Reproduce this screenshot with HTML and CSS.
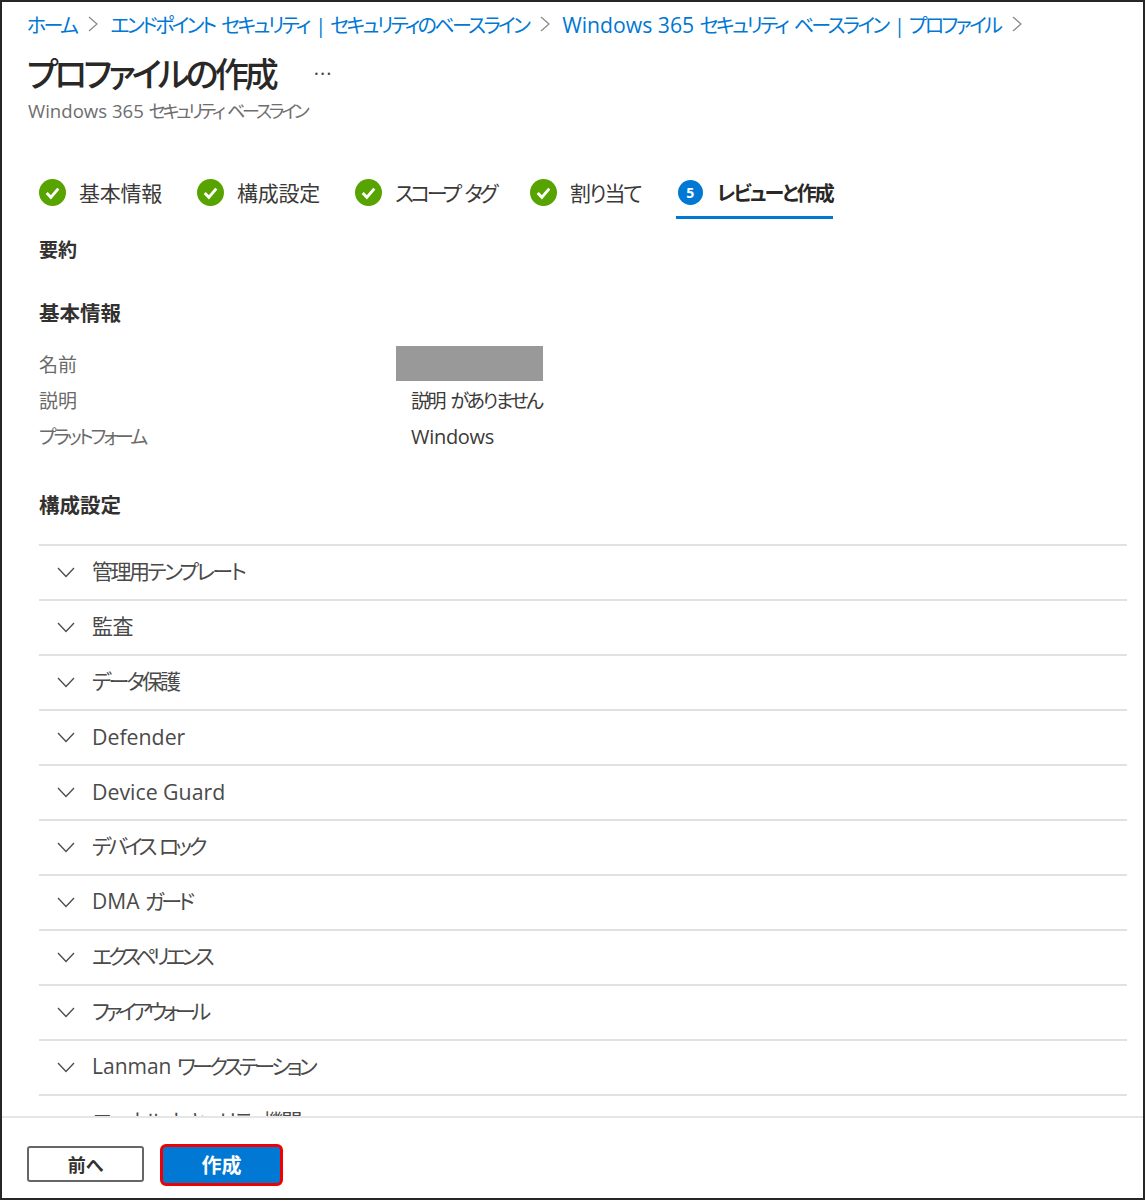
FILE: index.html
```html
<!DOCTYPE html>
<html lang="ja">
<head>
<meta charset="utf-8">
<title>プロファイルの作成</title>
<link rel="stylesheet" href="styles.css">
</head>
<body>
<div class="frame">
  <main class="main">
    <nav class="crumbs">
      <a class="crumb">ホーム</a>
      <svg class="sep" viewBox="0 0 10 16"><path d="M1 1 9 8 1 15"/></svg>
      <a class="crumb">エンドポイント セキュリティ | セキュリティのベースライン</a>
      <svg class="sep" viewBox="0 0 10 16"><path d="M1 1 9 8 1 15"/></svg>
      <a class="crumb"><span class="lat">Windows 365 </span>セキュリティ ベースライン | プロファイル</a>
      <svg class="sep" viewBox="0 0 10 16"><path d="M1 1 9 8 1 15"/></svg>
    </nav>
    <div class="title-row">
      <h1 class="title">プロファイルの作成</h1>
      <span class="more">···</span>
    </div>
    <p class="subtitle"><span class="lat">Windows 365 </span>セキュリティ ベースライン</p>

    <div class="steps">
      <div class="step">
        <svg class="check" viewBox="0 0 28 28"><circle cx="14" cy="14" r="14"/><path d="M8 14.500 12.300 19 20 10"/></svg>
        <span class="step-label">基本情報</span>
      </div>
      <div class="step">
        <svg class="check" viewBox="0 0 28 28"><circle cx="14" cy="14" r="14"/><path d="M8 14.500 12.300 19 20 10"/></svg>
        <span class="step-label">構成設定</span>
      </div>
      <div class="step">
        <svg class="check" viewBox="0 0 28 28"><circle cx="14" cy="14" r="14"/><path d="M8 14.500 12.300 19 20 10"/></svg>
        <span class="step-label step-label-scope">スコープ タグ</span>
      </div>
      <div class="step">
        <svg class="check" viewBox="0 0 28 28"><circle cx="14" cy="14" r="14"/><path d="M8 14.500 12.300 19 20 10"/></svg>
        <span class="step-label step-label-assign">割り当て</span>
      </div>
      <div class="step step-active">
        <span class="step-num">5</span>
        <span class="step-label step-label-active">レビューと作成</span>
      </div>
    </div>

    <h2 class="h-summary">要約</h2>
    <h2 class="h-basic">基本情報</h2>
    <dl class="info">
      <dt class="info-key">名前</dt><dd class="info-val"><span class="redact"></span></dd>
      <dt class="info-key">説明</dt><dd class="info-val">説明 がありません</dd>
      <dt class="info-key info-key-long">プラットフォーム</dt><dd class="info-val"><span class="lat-val">Windows</span></dd>
    </dl>
    <h2 class="h-config">構成設定</h2>

    <div class="list">
      <div class="row"><svg class="chev" viewBox="0 0 18 11"><path d="M1 1 9 9.500 17 1"/></svg><span class="row-text k1">管理用テンプレート</span></div>
      <div class="row"><svg class="chev" viewBox="0 0 18 11"><path d="M1 1 9 9.500 17 1"/></svg><span class="row-text k0">監査</span></div>
      <div class="row"><svg class="chev" viewBox="0 0 18 11"><path d="M1 1 9 9.500 17 1"/></svg><span class="row-text k1b">データ保護</span></div>
      <div class="row"><svg class="chev" viewBox="0 0 18 11"><path d="M1 1 9 9.500 17 1"/></svg><span class="row-text row-latin">Defender</span></div>
      <div class="row"><svg class="chev" viewBox="0 0 18 11"><path d="M1 1 9 9.500 17 1"/></svg><span class="row-text row-latin">Device Guard</span></div>
      <div class="row"><svg class="chev" viewBox="0 0 18 11"><path d="M1 1 9 9.500 17 1"/></svg><span class="row-text k2">デバイス ロック</span></div>
      <div class="row"><svg class="chev" viewBox="0 0 18 11"><path d="M1 1 9 9.500 17 1"/></svg><span class="row-text">DMA <span class="k2">ガード</span></span></div>
      <div class="row"><svg class="chev" viewBox="0 0 18 11"><path d="M1 1 9 9.500 17 1"/></svg><span class="row-text k3">エクスペリエンス</span></div>
      <div class="row"><svg class="chev" viewBox="0 0 18 11"><path d="M1 1 9 9.500 17 1"/></svg><span class="row-text k3">ファイアウォール</span></div>
      <div class="row"><svg class="chev" viewBox="0 0 18 11"><path d="M1 1 9 9.500 17 1"/></svg><span class="row-text">Lanman <span class="k2">ワークステーション</span></span></div>
      <div class="row"><svg class="chev" viewBox="0 0 18 11"><path d="M1 1 9 9.500 17 1"/></svg><span class="row-text k1">ローカル セキュリティ機関</span></div>
    </div>
  </main>
  <footer class="footer">
    <button class="btn btn-prev">前へ</button>
    <button class="btn btn-create">作成</button>
  </footer>
</div>
</body>
</html>
```
FILE: styles.css
```css
* { box-sizing: border-box; }
html, body { margin: 0; padding: 0; background: #fff; }
body {
  font-family: "Open Sans", "Noto Sans CJK JP", sans-serif;
  font-feature-settings: "palt";
  color: #323130;
}
.frame {
  width: 1145px;
  height: 1200px;
  border: 2px solid #262626;
  display: flex;
  flex-direction: column;
  overflow: hidden;
}
.main {
  flex: 1;
  min-height: 0;
  overflow: hidden;
  padding: 0 16px 0 37px;
}
.crumbs {
  display: flex;
  align-items: center;
  gap: 12px;
  height: 44px;
  margin-left: -12px;
  white-space: nowrap;
}
.crumb { color: #0078d4; font-size: 20px; letter-spacing: -2.65px; word-spacing: 4px; }
.lat { letter-spacing: 0; word-spacing: 0; font-size: 21.2px; }
.subtitle .lat { font-size: 18.6px; }
.sep { width: 10px; height: 16px; flex: none; }
.sep path { fill: none; stroke: #8a8886; stroke-width: 1.2; }
.title-row {
  display: flex;
  align-items: center;
  margin-left: -12px;
  height: 52px;
  margin-top: 2px;
}
.title { margin: 0; font-size: 34px; font-weight: 500; letter-spacing: -3.9px; color: #292827; line-height: 1; white-space: nowrap; }
.more { margin-left: 39px; font-size: 20px; color: #444; line-height: 1; letter-spacing: 1px; }
.subtitle { margin: -1px 0 0 -11px; font-size: 18px; line-height: 24px; color: #6e6e6e; letter-spacing: -3.2px; word-spacing: 3px; white-space: nowrap; }
.steps {
  display: flex;
  align-items: flex-start;
  gap: 35px;
  margin-top: 45px;
  height: 51px;
}
.step { display: flex; align-items: center; gap: 13px; height: 48px; }
.step-active { height: 51px; border-bottom: 3px solid #0078d4; padding-left: 2px; gap: 14px; }
.check { width: 27px; height: 27px; flex: none; }
.check circle { fill: #57a300; }
.check path { fill: none; stroke: #fff; stroke-width: 3; }
.step-num {
  width: 25px; height: 25px; border-radius: 50%;
  background: #0078d4; color: #fff;
  font-size: 14px; font-weight: 700; line-height: 25px; text-align: center; flex: none;
}
.step-label { font-size: 21px; color: #3b3a39; white-space: nowrap; letter-spacing: -0.25px; }
.step-label-scope { letter-spacing: -3.5px; word-spacing: 4px; }
.step-label-assign { letter-spacing: -2px; }
.step-label-active { font-size: 20px; font-weight: 700; color: #292827; letter-spacing: -2px; }
h2 { margin: 0; font-size: 20.5px; font-weight: 700; color: #323130; line-height: 28px; }
.h-summary { margin-top: 17px; font-size: 19px; }
.h-basic { margin-top: 35px; }
.info {
  display: grid;
  grid-template-columns: 357px 1fr;
  grid-auto-rows: 36px;
  margin: 18px 0 0;
  align-items: center;
}
.info-key { color: #6a6a6a; font-size: 19px; padding-top: 2px; }
.info-key-long { letter-spacing: -3px; white-space: nowrap; }
.info-val { margin: 0; padding: 2px 0 0 15px; font-size: 19px; letter-spacing: -2.5px; word-spacing: 4px; color: #3b3a39; white-space: nowrap; }
.info-val:first-of-type { padding: 0; }
.lat-val { font-size: 20px; letter-spacing: -0.3px; }
.redact { display: block; width: 147px; height: 35px; background: #999; }
.h-config { margin-top: 38px; }
.list { margin-top: 25px; }
.row {
  display: flex;
  align-items: center;
  height: 55px;
  border-top: 2px solid #e1e1e1;
  padding: 0 0 2px 18px;
  font-size: 21px;
  color: #4a4a4a;
  white-space: nowrap;
}
.row-text { padding-bottom: 3px; }
.row-text.row-latin { padding-bottom: 1px; font-size: 21.3px; }
.k0 { letter-spacing: -0.4px; }
.k1 { letter-spacing: -2.5px; word-spacing: 4px; }
.k1b { letter-spacing: -2.9px; }
.k2 { letter-spacing: -3.6px; word-spacing: 3px; }
.k3 { letter-spacing: -4.15px; }
.chev { width: 18px; height: 11px; margin: 2px 17px 0 0; flex: none; }
.chev path { fill: none; stroke: #4a4a4a; stroke-width: 1.3; }
.footer {
  flex: none;
  height: 82px;
  border-top: 2px solid #e6e6e6;
  display: flex;
  align-items: center;
  padding: 0 0 0 25px;
  gap: 16px;
  background: #fff;
}
.btn { font-family: inherit; font-feature-settings: inherit; font-size: 18px; font-weight: 700; cursor: pointer; padding: 0; }
.btn-prev { width: 117px; height: 36px; margin-top: 12px; background: #fff; border: 2px solid #666; border-radius: 3px; color: #323130; }
.btn-create { width: 123px; height: 42px; margin-top: 13px; background: #0078d4; border: 3px solid #f00000; border-radius: 6px; color: #fff; font-size: 20px; }
```
